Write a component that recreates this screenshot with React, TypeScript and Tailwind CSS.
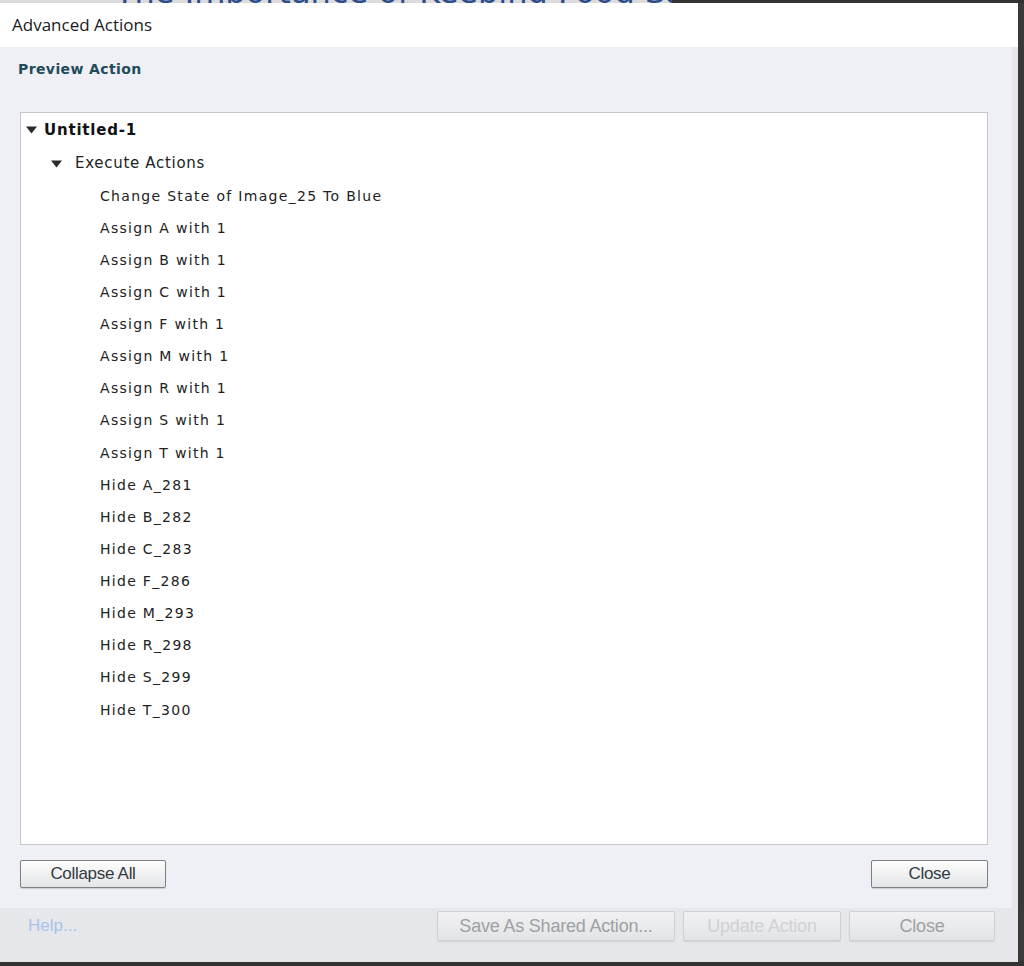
import React from "react";

const items = [
  "Change State of Image_25 To Blue",
  "Assign A with 1",
  "Assign B with 1",
  "Assign C with 1",
  "Assign F with 1",
  "Assign M with 1",
  "Assign R with 1",
  "Assign S with 1",
  "Assign T with 1",
  "Hide A_281",
  "Hide B_282",
  "Hide C_283",
  "Hide F_286",
  "Hide M_293",
  "Hide R_298",
  "Hide S_299",
  "Hide T_300",
];

const Caret = () => (
  <svg width="11" height="8" viewBox="0 0 11 8" className="shrink-0">
    <path d="M0 0.5 L11 0.5 L5.5 7.5 Z" fill="#2a2a2a" />
  </svg>
);

const Button = ({ label, className }: { label: string; className: string }) => (
  <button
    className={
      "flex items-center justify-center h-[28px] border border-[#7d7f82] rounded-[2px] bg-gradient-to-b from-[#fdfdfd] to-[#e4e5e7] text-[17px] text-[#333a3e] tracking-[-0.3px] shadow-[0_1px_1px_rgba(0,0,0,0.15)] " +
      className
    }
    style={{ fontFamily: '"Liberation Sans", Arial, sans-serif' }}
  >
    {label}
  </button>
);

const FadedButton = ({ label, className }: { label: string; className: string }) => (
  <button
    className={
      "flex items-center justify-center h-[30px] border border-[#cfd0d3] rounded-[2px] bg-gradient-to-b from-[#f1f1f3] to-[#e3e4e7] text-[18px] tracking-[-0.2px] shadow-[0_1px_1px_rgba(0,0,0,0.08)] " +
      className
    }
    style={{ fontFamily: '"Liberation Sans", Arial, sans-serif' }}
  >
    {label}
  </button>
);

export default function App() {
  return (
    <div className="w-[1024px] h-[966px] bg-[#3a3a3a] flex flex-col overflow-hidden">
      {/* page behind the dialog */}
      <div className="h-[3px] flex shrink-0">
        <div className="w-[672px] bg-[#dcdcdc] overflow-hidden">
          <div
            className="pl-[115px] mt-[-22px] text-[32px] leading-[28px] text-[#2d4c8c] whitespace-nowrap"
            style={{ fontFamily: '"DejaVu Sans", Verdana, sans-serif' }}
          >
            The Importance of Keeping Food Saf
          </div>
        </div>
        <div className="flex-1 bg-[#333333]" />
      </div>

      <div className="flex-1 flex min-h-0">
        {/* dialog */}
        <div className="w-[1018px] flex flex-col">
          <div
            className="h-[44px] bg-white flex items-center pl-[12px] text-[17px] text-[#1b1b1b]"
            style={{ fontFamily: '"Open Sans", "Noto Sans", sans-serif' }}
          >
            Advanced Actions
          </div>

          <div className="flex-1 bg-[#eff0f5] border-r-[6px] border-[#e5e6eb] flex flex-col pt-[13px] pb-[19px]">
            <div
              className="pl-[18px] h-[18px] flex items-center text-[14px] font-bold tracking-[0.4px] text-[#1f4b5b]"
              style={{ fontFamily: '"DejaVu Sans", Verdana, sans-serif' }}
            >
              Preview Action
            </div>

            <div
              className="ml-[20px] mt-[34px] w-[968px] h-[733px] bg-white border border-[#c6c7cc] flex flex-col text-[#222]"
              style={{ fontFamily: '"DejaVu Sans", Verdana, sans-serif' }}
            >
              <div className="h-[34px] flex items-center gap-[7px] pl-[5px] text-[15px] font-bold tracking-[0.8px] text-[#111]">
                <Caret />
                <span>Untitled-1</span>
              </div>
              <div className="h-[33px] flex items-center gap-[13px] pl-[30px] text-[15px] tracking-[0.7px]">
                <Caret />
                <span>Execute Actions</span>
              </div>
              {items.map((t) => (
                <div key={t} className="h-[32.125px] flex items-center pl-[79px] text-[14px] tracking-[1.3px]">
                  {t}
                </div>
              ))}
            </div>

            <div className="mt-[15px] flex justify-between pl-[20px] pr-[24px]">
              <Button label="Collapse All" className="w-[146px]" />
              <Button label="Close" className="w-[117px]" />
            </div>
          </div>

          <div className="h-[54px] bg-[#e6e7eb] flex items-start pt-[3px] pr-[23px]">
            <div
              className="pl-[28px] pt-[2px] text-[17px] text-[#a9c2ec]"
              style={{ fontFamily: '"Liberation Sans", Arial, sans-serif' }}
            >
              Help...
            </div>
            <div className="ml-auto flex gap-[8px]">
              <FadedButton label="Save As Shared Action..." className="w-[238px] text-[#9ea1a3]" />
              <FadedButton label="Update Action" className="w-[158px] text-[#d0d1d3]" />
              <FadedButton label="Close" className="w-[146px] text-[#9ea1a3]" />
            </div>
          </div>
        </div>
        <div className="flex-1 bg-[#3a3a3a]" />
      </div>

      <div className="h-[4px] bg-[#333333] shrink-0" />
    </div>
  );
}
